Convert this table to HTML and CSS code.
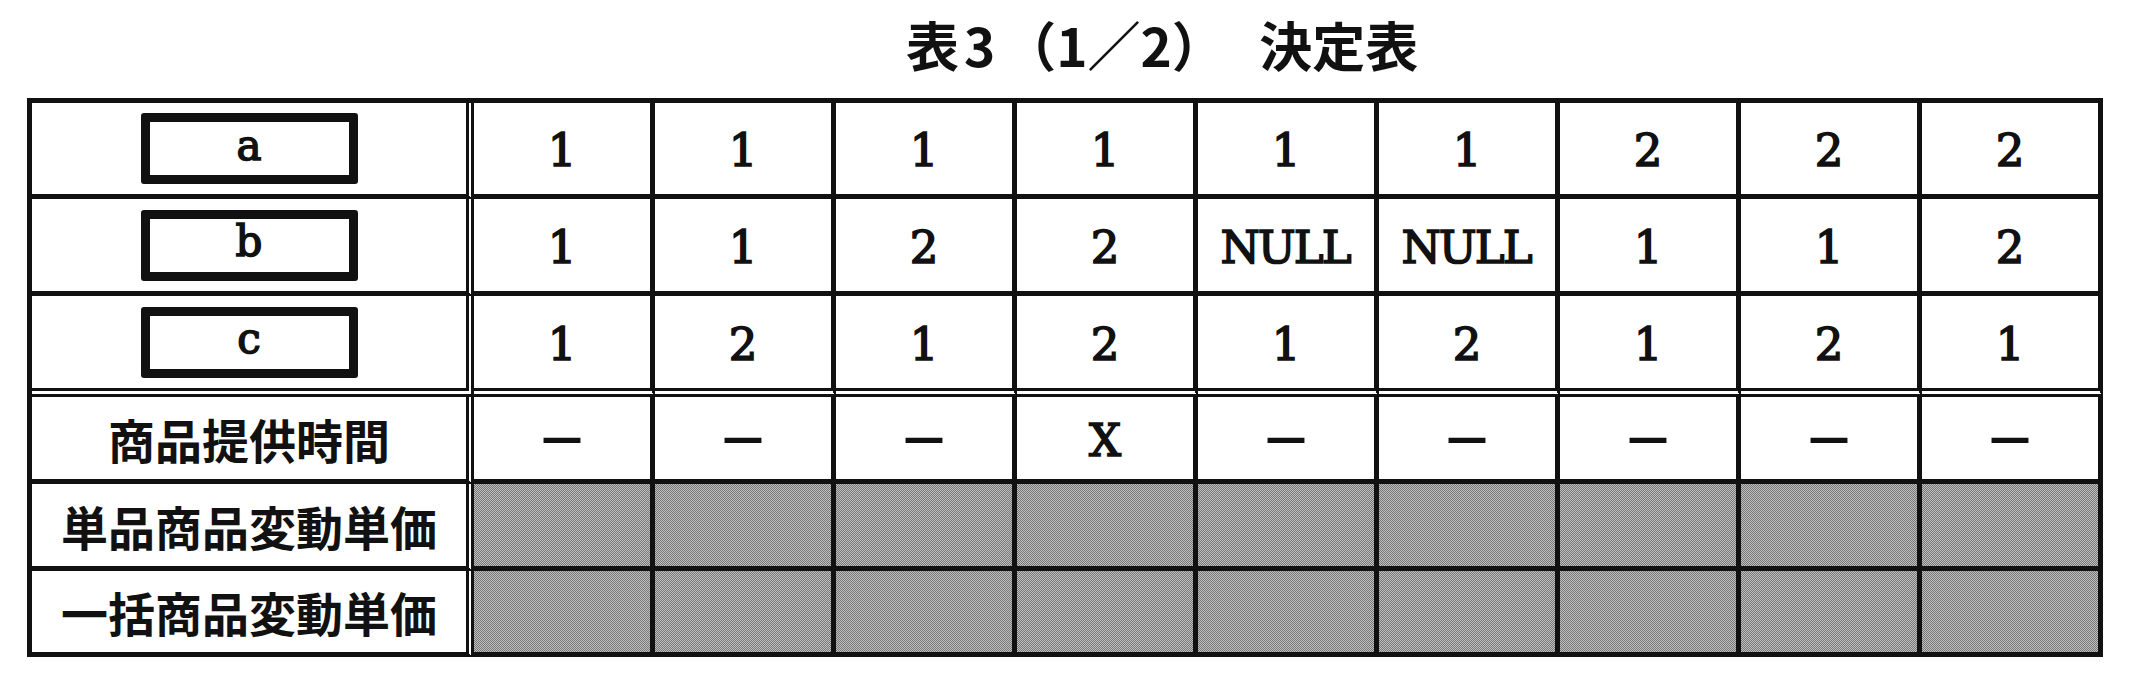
FILE: index.html
```html
<!DOCTYPE html>
<html lang="ja">
<head>
<meta charset="utf-8">
<title>表3（1／2） 決定表</title>
<link rel="stylesheet" href="styles.css">
</head>
<body>
<h1 class="title">表<span class="num">3</span>（1／2）　<span class="name">決定表</span></h1>
<div class="dt">
  <div class="cell lbl"><span class="var">a</span></div>
  <div class="cell">1</div><div class="cell">1</div><div class="cell">1</div><div class="cell">1</div><div class="cell">1</div><div class="cell">1</div><div class="cell">2</div><div class="cell">2</div><div class="cell">2</div>

  <div class="cell lbl"><span class="var">b</span></div>
  <div class="cell">1</div><div class="cell">1</div><div class="cell">2</div><div class="cell">2</div><div class="cell null">NULL</div><div class="cell null">NULL</div><div class="cell">1</div><div class="cell">1</div><div class="cell">2</div>

  <div class="cell lbl sep"><span class="var">c</span></div>
  <div class="cell sep">1</div><div class="cell sep">2</div><div class="cell sep">1</div><div class="cell sep">2</div><div class="cell sep">1</div><div class="cell sep">2</div><div class="cell sep">1</div><div class="cell sep">2</div><div class="cell sep">1</div>

  <div class="cell lbl jp">商品提供時間</div>
  <div class="cell dash">－</div><div class="cell dash">－</div><div class="cell dash">－</div><div class="cell">X</div><div class="cell dash">－</div><div class="cell dash">－</div><div class="cell dash">－</div><div class="cell dash">－</div><div class="cell dash">－</div>

  <div class="cell lbl jp">単品商品変動単価</div>
  <div class="cell shade"></div><div class="cell shade"></div><div class="cell shade"></div><div class="cell shade"></div><div class="cell shade"></div><div class="cell shade"></div><div class="cell shade"></div><div class="cell shade"></div><div class="cell shade"></div>

  <div class="cell lbl jp">一括商品変動単価</div>
  <div class="cell shade"></div><div class="cell shade"></div><div class="cell shade"></div><div class="cell shade"></div><div class="cell shade"></div><div class="cell shade"></div><div class="cell shade"></div><div class="cell shade"></div><div class="cell shade"></div>
</div>
</body>
</html>
```

FILE: styles.css
```css
html, body {
  margin: 0;
  padding: 0;
  background: #fff;
  color: #111;
}

.title {
  margin: 0;
  padding: 18px 0 0 906px;
  height: 53px;
  font-family: "Noto Sans CJK JP", "Noto Sans", sans-serif;
  font-weight: 700;
  font-size: 53px;
  line-height: 53px;
  white-space: pre;
}

.title .num {
  margin: 0 8px 0 5px;
}

.title .name {
  margin-left: 8px;
}

.dt {
  margin: 27px 0 0 27px;
  display: grid;
  width: max-content;
  grid-template-columns: 442px repeat(9, 181px);
  grid-template-rows: 96px 97px 101px 87px 87px 86px;
  border-top: 5px solid #111;
  border-left: 5px solid #111;
}

.cell {
  box-sizing: border-box;
  border-right: 5px solid #111;
  border-bottom: 5px solid #111;
  display: flex;
  align-items: center;
  justify-content: center;
  font-family: "DejaVu Serif", "Liberation Serif", serif;
  font-weight: 400;
  font-size: 45px;
  line-height: 1;
  -webkit-text-stroke: 1.6px #111;
  padding-top: 4px;
  background: #fff;
}

.cell.null {
  letter-spacing: -2px;
  text-indent: -2px;
}

.cell.lbl {
  border-right: 8px double #111;
  padding-top: 0;
  -webkit-text-stroke: 0;
}

.cell.sep {
  border-bottom: 9px double #111;
}

.var {
  box-sizing: border-box;
  width: 217px;
  height: 71px;
  border: 9px solid #111;
  border-radius: 3px;
  display: flex;
  align-items: center;
  justify-content: center;
  font-family: "DejaVu Serif", "Liberation Serif", serif;
  font-weight: 400;
  font-size: 42px;
  -webkit-text-stroke: 1.6px #111;
  padding-bottom: 6px;
}

.jp {
  font-family: "Noto Sans CJK JP", "Noto Sans", sans-serif;
  font-weight: 700;
  font-size: 47px;
}

.dash {
  font-family: "Noto Sans CJK JP", "Noto Sans", sans-serif;
  font-weight: 700;
  font-size: 52px;
  padding-top: 0;
  -webkit-text-stroke: 0;
}

.shade {
  background-color: #9b9b9b;
  background-image: repeating-conic-gradient(#777 0 25%, #c0c0c0 0 50%);
  background-size: 2px 2px;
}
```
